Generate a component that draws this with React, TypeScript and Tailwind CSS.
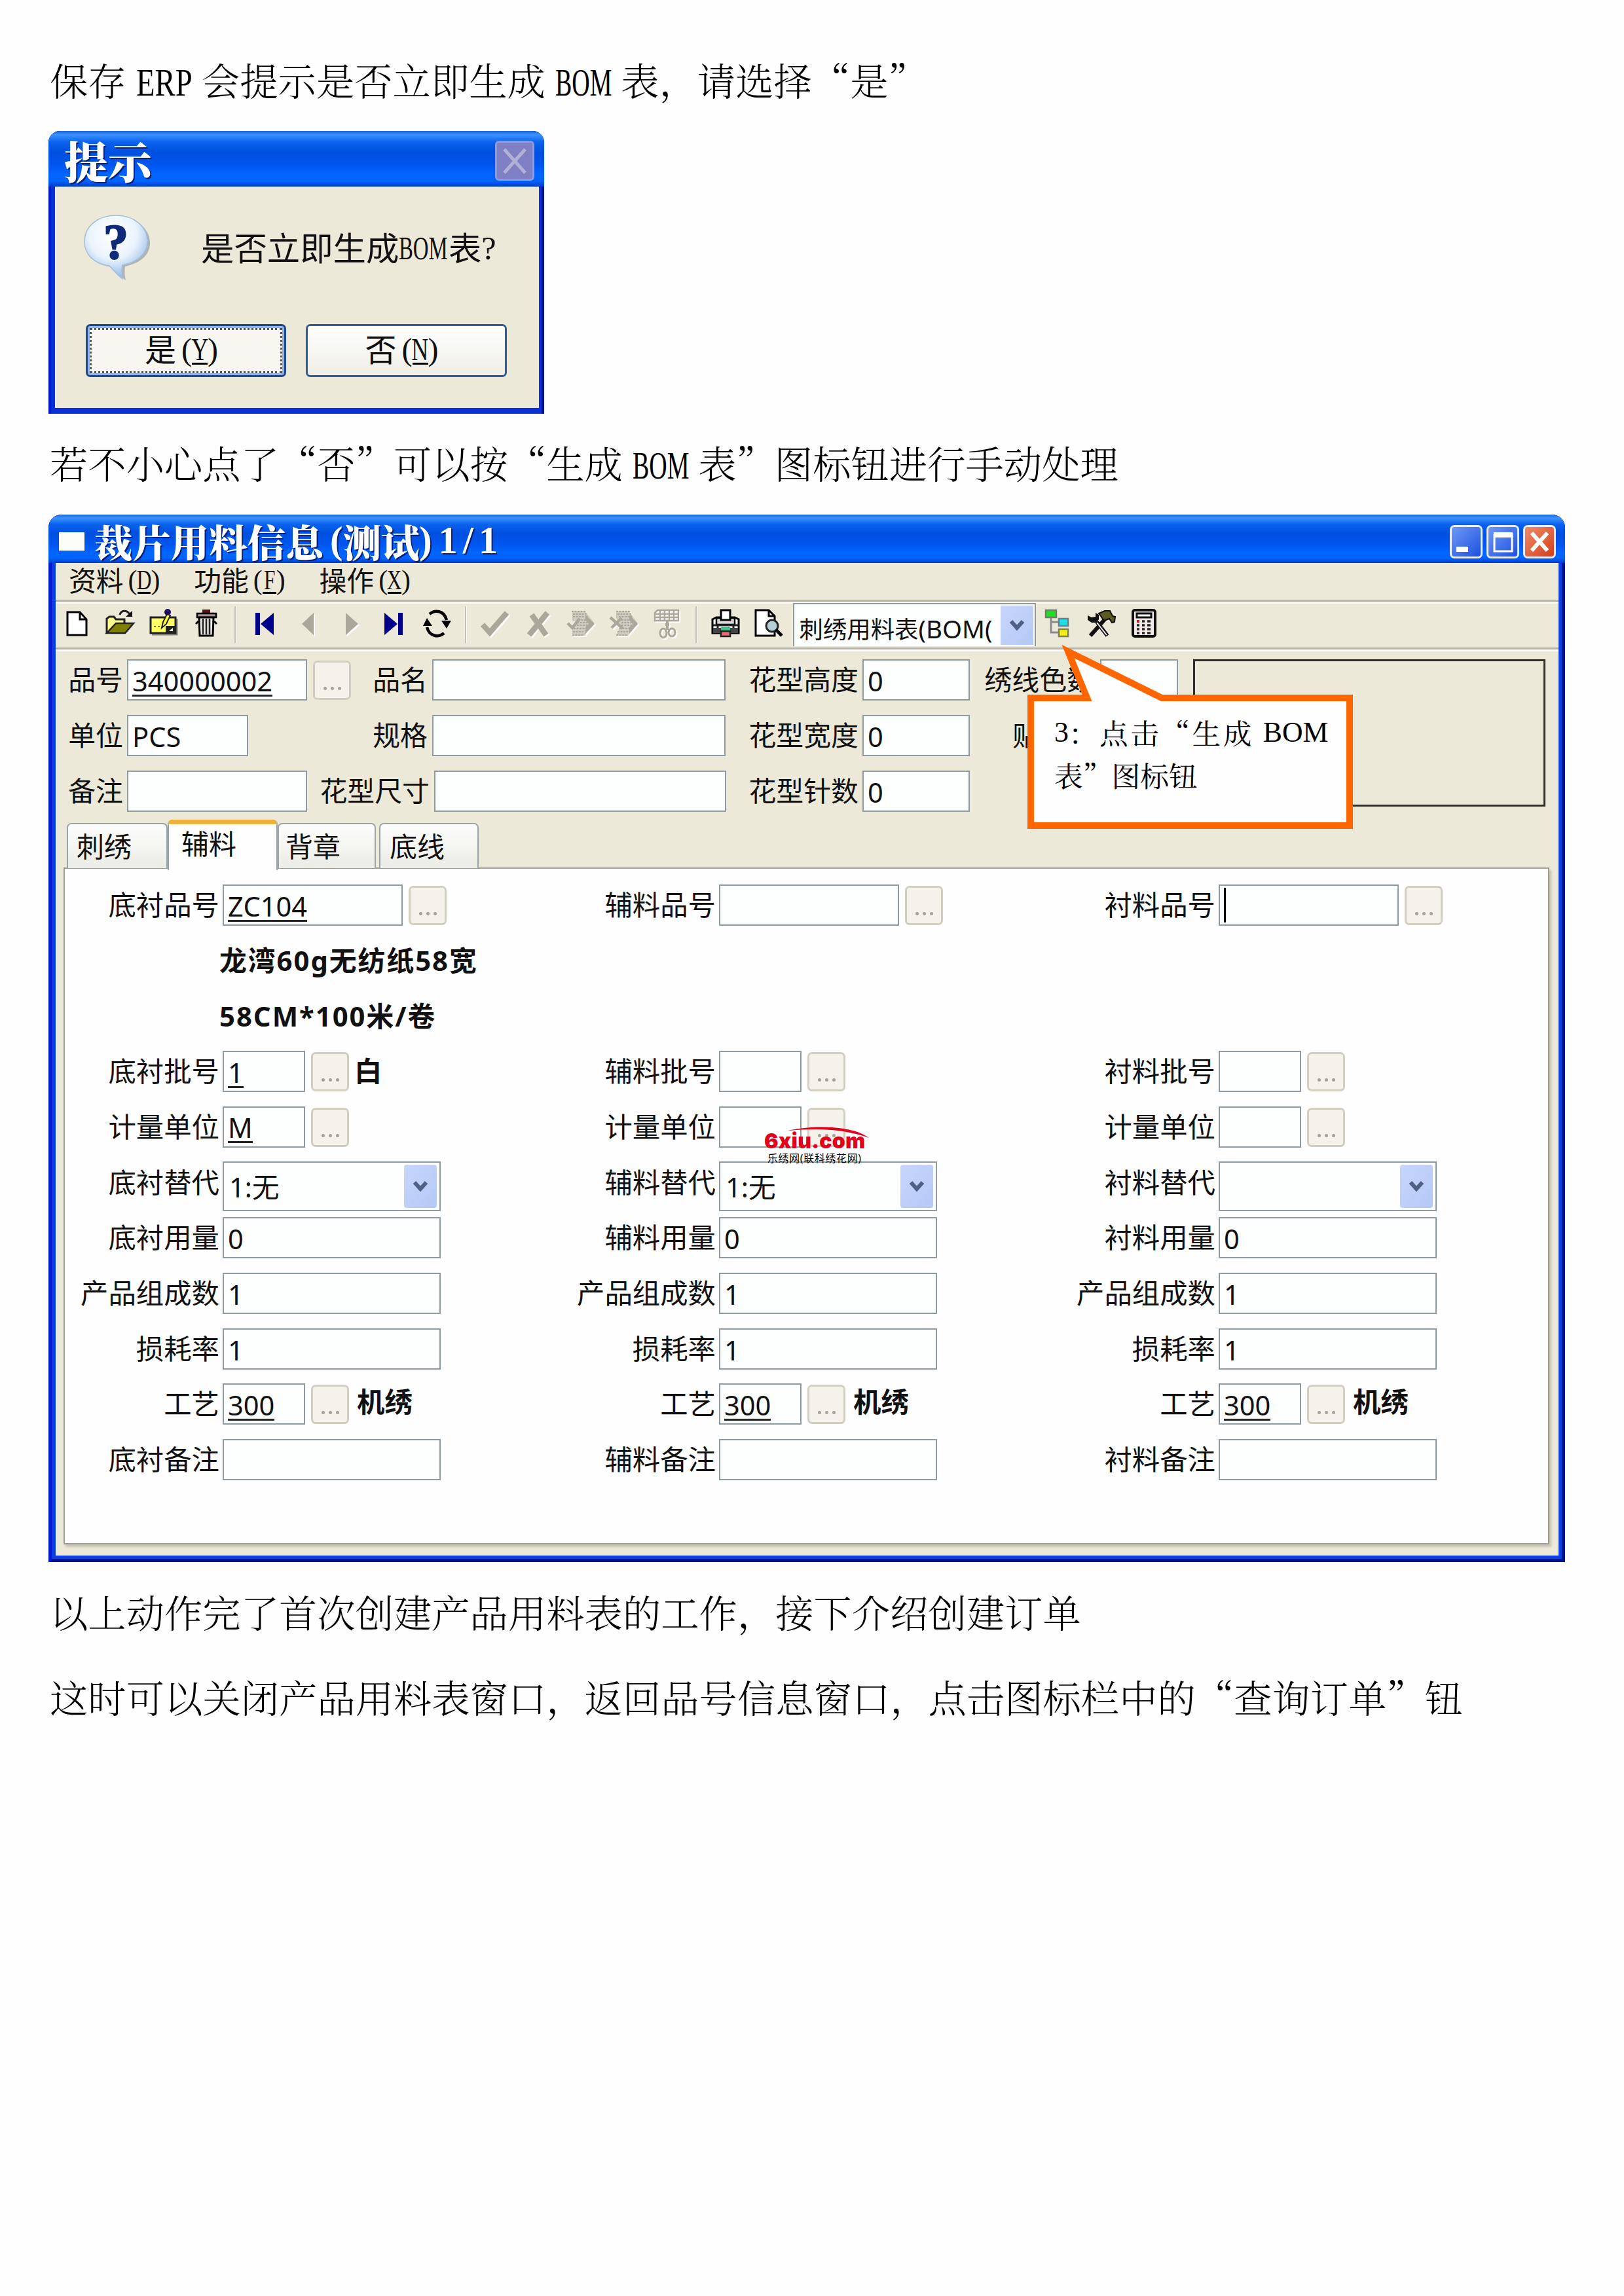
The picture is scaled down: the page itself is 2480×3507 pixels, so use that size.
import type { ReactNode } from "react";
import clsx from "clsx";

interface FieldRow {
  label: string;
  kind?: "text" | "select" | "empty";
  value?: string;
  width?: string;
  lookup?: boolean;
  note?: string;
  caret?: boolean;
}

const SMALL = "w-[126px]";
const MEDIUM = "w-[275px]";
const WIDE = "w-[333px]";

function buildRows(
  name: string,
  values: {
    item?: string;
    itemNotes?: string[];
    batch?: string;
    batchNote?: string;
    unit?: string;
    replace?: string;
    caret?: boolean;
  }
): FieldRow[] {
  const notes = values.itemNotes || ["", ""];
  return [
    {
      label: `${name}品号`,
      value: values.item,
      width: MEDIUM,
      lookup: true,
      caret: values.caret,
    },
    { label: "", kind: "empty", note: notes[0] },
    { label: "", kind: "empty", note: notes[1] },
    {
      label: `${name}批号`,
      value: values.batch,
      width: SMALL,
      lookup: true,
      note: values.batchNote,
    },
    { label: "计量单位", value: values.unit, width: SMALL, lookup: true },
    { label: `${name}替代`, kind: "select", value: values.replace },
    { label: `${name}用量`, value: "0", width: WIDE },
    { label: "产品组成数", value: "1", width: WIDE },
    { label: "损耗率", value: "1", width: WIDE },
    { label: "工艺", value: "300", width: SMALL, lookup: true, note: "机绣" },
    { label: `${name}备注`, width: WIDE },
  ];
}

const columns: FieldRow[][] = [
  buildRows("底衬", {
    item: "ZC104",
    itemNotes: ["龙湾60g无纺纸58宽", "58CM*100米/卷"],
    batch: "1",
    batchNote: "白",
    unit: "M",
    replace: "1:无",
  }),
  buildRows("辅料", { replace: "1:无" }),
  buildRows("衬料", { caret: true }),
];

// Latin letters squeezed to half the width of a Chinese character
function Half({ children, wide }: { children: string; wide?: boolean }) {
  return (
    <span className="inline-block w-[1.46em] whitespace-nowrap font-['Liberation_Serif',serif]">
      <span
        className={clsx(
          "inline-block origin-left",
          wide ? "scale-x-[0.8]" : "scale-x-[0.65]"
        )}
      >
        {children}
      </span>
    </span>
  );
}

function Key({ children }: { children: string }) {
  return (
    <span className="inline-flex font-['Liberation_Serif',serif]">
      <span className="w-[0.5em] text-right">(</span>
      <span className="flex h-[0.98em] w-[0.5em] justify-center border-b-[3px] border-black leading-none">
        <span className="scale-x-75">{children}</span>
      </span>
      <span className="w-[0.5em]">)</span>
    </span>
  );
}

function Paragraph({ children }: { children: ReactNode }) {
  return (
    <p className="flex h-[60px] items-center whitespace-pre pl-[76px] font-['Noto_Serif_CJK_SC','Noto_Sans_CJK_SC',serif] text-[58.33px] font-light leading-none text-black">
      <span>{children}</span>
    </p>
  );
}

function TextBox({
  value,
  width,
  underline,
  caret,
}: {
  value?: string;
  width: string;
  underline?: boolean;
  caret?: boolean;
}) {
  return (
    <div
      className={clsx(
        "flex h-[63px] shrink-0 items-center border-2 border-[#8f9ba3] bg-[#fdfefe] pl-[6px]",
        width
      )}
    >
      {caret && <span className="h-[53px] w-[3px] bg-black" />}
      {value && (
        <span
          className={clsx(
            "mt-[3px] text-[41.6px] leading-[42px]",
            underline && "mt-[5px] border-b-[3px] border-[#222]"
          )}
        >
          {value}
        </span>
      )}
    </div>
  );
}

function LookupButton() {
  return (
    <div className="ml-[9px] flex h-[60px] w-[58px] shrink-0 items-end justify-center gap-[6px] rounded-[7px] border-[3px] border-[#d3cfc0] bg-[#f4f2ea] pb-[12px]">
      <span className="size-[5px] rounded-full bg-[#a5a297]" />
      <span className="size-[5px] rounded-full bg-[#a5a297]" />
      <span className="size-[5px] rounded-full bg-[#a5a297]" />
    </div>
  );
}

function Chevron() {
  return (
    <svg width="24" height="20" viewBox="0 0 24 20" fill="none">
      <path d="M3 4l9 10 9-10" stroke="#4d6185" strokeWidth="6" />
    </svg>
  );
}

function SelectBox({ value }: { value?: string }) {
  return (
    <div className="flex h-[76px] w-[333px] shrink-0 items-center border-2 border-[#8f9ba3] bg-[#fdfefe] pl-[8px] pr-[4px]">
      <span className="mt-[3px] flex-1 text-[41.6px] leading-none">{value}</span>
      <span className="flex h-[66px] w-[50px] items-center justify-center rounded-[4px] bg-linear-to-br from-[#c8d6fb] to-[#b4c8f6]">
        <Chevron />
      </span>
    </div>
  );
}

function FormRow({ row }: { row: FieldRow }) {
  if (row.kind === "empty") {
    return (
      <div className="h-[84.7px]">
        <div className="flex h-[63px] items-center pl-[236px] text-[41.8px] font-bold leading-none tracking-[2px] whitespace-nowrap">
          {row.note}
        </div>
      </div>
    );
  }

  return (
    <div className="flex h-[84.7px] items-start">
      <div className="mr-[5px] flex h-[63px] w-[236px] items-center justify-end text-[42.4px] leading-none">
        {row.label}
      </div>
      {row.kind === "select" ? (
        <SelectBox value={row.value} />
      ) : (
        <TextBox
          value={row.value}
          width={row.width || WIDE}
          underline={row.lookup}
          caret={row.caret}
        />
      )}
      {row.lookup && (
        <div className="pt-[2px]">
          <LookupButton />
        </div>
      )}
      {row.note && (
        <div
          className={clsx(
            "flex h-[63px] items-center text-[42.4px] font-bold leading-none",
            row.note === "白" ? "ml-[8px]" : "ml-[12px] pb-[6px]"
          )}
        >
          {row.note}
        </div>
      )}
    </div>
  );
}

function ToolIcon({ children }: { children: ReactNode }) {
  return (
    <span className="flex w-[65.6px] shrink-0 justify-center">
      <svg width="48" height="48" viewBox="0 0 48 48" fill="none">
        {children}
      </svg>
    </span>
  );
}

function Divider() {
  return (
    <span className="mx-[10.5px] h-[56px] w-[3px] shrink-0 border-r border-white bg-[#c5c2b2]" />
  );
}

// Grey glyph with the white relief XP puts behind disabled icons
function Disabled({ children }: { children: ReactNode }) {
  return (
    <ToolIcon>
      <g transform="translate(2 2)" className="text-white">
        {children}
      </g>
      <g className="text-[#aca899]">{children}</g>
    </ToolIcon>
  );
}

function Toolbar() {
  return (
    <div className="flex h-[76px] items-center border-y-[3px] border-[#b5b3a6] bg-[#ece9d8] shadow-[inset_0_3px_0_#fbfaf5,0_3px_0_#fbfaf5]">
      <ToolIcon>
        <path d="M9 5h19l10 11v24H9z" fill="#fff" stroke="#000" strokeWidth="3" />
        <path d="M28 5v11h10" stroke="#000" strokeWidth="3" />
      </ToolIcon>
      <ToolIcon>
        <path d="M4 37V15l4-3h7l3 4h13v7" fill="#ffff8c" stroke="#222" strokeWidth="3" />
        <path d="M4 37l14-15h27L32 37z" fill="#808000" stroke="#222" strokeWidth="2.5" />
        <path d="M24 9c2-7 10-8 15-1" stroke="#222" strokeWidth="3" />
        <path d="M33 12h10V3z" fill="#111" />
      </ToolIcon>
      <ToolIcon>
        <path d="M7 39h38V15" stroke="#8a887c" strokeWidth="3" />
        <path d="M5 13h38v24H5z" fill="#ffff66" stroke="#222" strokeWidth="3" />
        <path d="M28 26h15v11H28z" fill="#222" />
        <path d="M33 34l6-5v5z" fill="#eee" />
        <path d="M10 27h3m3 0h3" stroke="#808000" strokeWidth="2" />
        <path d="M22 29l2-9 6-12 5 2-6 13z" fill="#ffff30" stroke="#222" strokeWidth="2" />
        <circle cx="31" cy="5" r="5" fill="#1b0a60" />
      </ToolIcon>
      <ToolIcon>
        <path d="M18 1h12v6H18z" fill="#5a1010" />
        <path d="M10 7h29v6H10z" fill="#a89090" stroke="#000" strokeWidth="2.5" />
        <path d="M13 13h22l-1 28H14z" fill="#f2f0e8" stroke="#000" strokeWidth="3" />
        <path d="M19 15v24M24 15v24M29 15v24" stroke="#222" strokeWidth="2.6" />
        <path d="M12 19l-4 4M36 19l4 4" stroke="#000" strokeWidth="3" />
      </ToolIcon>
      <Divider />
      <ToolIcon>
        <path d="M10 6h7v34h-7zM38 6v34L18 23z" fill="#00008b" />
      </ToolIcon>
      <Disabled>
        <path d="M33 6v34L15 23z" fill="currentColor" />
      </Disabled>
      <Disabled>
        <path d="M17 6v34l19-17z" fill="currentColor" />
      </Disabled>
      <ToolIcon>
        <path d="M31 6h7v34h-7zM10 6v34l20-17z" fill="#00008b" />
      </ToolIcon>
      <ToolIcon>
        <path d="M13 8c8-7 22-6 26 9M35 37c-8 7-22 6-26-9" stroke="#000" strokeWidth="4.5" />
        <path d="M31 18h15l-7 12zM3 26h14L9 14z" fill="#000" />
      </ToolIcon>
      <Divider />
      <Disabled>
        <path d="M5 24l11 12L42 6" stroke="currentColor" strokeWidth="8.5" />
      </Disabled>
      <Disabled>
        <path d="M10 40L38 6M14 9l22 31" stroke="currentColor" strokeWidth="8.5" />
      </Disabled>
      <Disabled>
        <path
          d="M11 4h20l14 18-12 14-3 5H11V30l8-9-8-3z"
          fill="currentColor"
          fillOpacity="0.55"
        />
        <path
          d="M10 4h20l4 9M12 8h18M12 12h18M20 17h14M18 21h18M18 25h18M13 30h20M12 35h16M11 40h18"
          stroke="currentColor"
          strokeWidth="2"
          strokeDasharray="3 1.5"
        />
        <path d="M31 9l14 14-14 15V28l5-5-5-6z" fill="currentColor" />
        <path d="M4 22l7 7 11-14" stroke="currentColor" strokeWidth="4.5" />
      </Disabled>
      <Disabled>
        <path
          d="M12 4h20l13 18-12 14-3 5H12l4-9 2-8-6-10z"
          fill="currentColor"
          fillOpacity="0.55"
        />
        <path
          d="M12 4h20l4 9M14 8h16M16 12h16M20 17h14M20 21h16M20 25h16M17 30h16M14 35h16M12 40h18"
          stroke="currentColor"
          strokeWidth="2"
          strokeDasharray="3 1.5"
        />
        <path d="M32 9l13 14-13 15V28l5-5-5-6z" fill="currentColor" />
        <path d="M3 13l19 17M20 14L5 29" stroke="currentColor" strokeWidth="4.5" />
      </Disabled>
      <Disabled>
        <path
          d="M9 2h32v16H5V6zM5 8h36M5 13h36M13 2v16M20 2v16M27 2v16M34 2v16"
          stroke="currentColor"
          strokeWidth="2.4"
        />
        <path d="M24 18v14M21 24h6" stroke="currentColor" strokeWidth="4" />
        <ellipse cx="18" cy="37" rx="5" ry="7" stroke="currentColor" strokeWidth="3" />
        <ellipse cx="31" cy="36" rx="5" ry="6" stroke="currentColor" strokeWidth="3" />
      </Disabled>
      <Divider />
      <ToolIcon>
        <path d="M4 16l6-3h28l6 3v21H4z" fill="#fff" stroke="#000" strokeWidth="3" />
        <path d="M10 14h28v10H10z" fill="#d9d9d9" stroke="#000" strokeWidth="2.5" />
        <path d="M4 25h40M12 25v12M36 25v12" stroke="#222" strokeWidth="3" />
        <path d="M5 29h38v8H5z" fill="#444" />
        <path d="M17 2h14v15H17z" fill="#fff" stroke="#000" strokeWidth="3" />
        <path d="M17 28h14v6H17z" fill="#3fc48a" />
        <path d="M17 34h14v8H17z" fill="#e66a72" stroke="#222" strokeWidth="2.5" />
      </ToolIcon>
      <ToolIcon>
        <path d="M4 2h20l9 9v30H4z" fill="#fff" stroke="#000" strokeWidth="3" />
        <path d="M24 2v9h9" stroke="#000" strokeWidth="3" />
        <circle cx="29" cy="26" r="9" fill="#b5d0d4" stroke="#222" strokeWidth="3" />
        <path d="M35 32l9 9" stroke="#000" strokeWidth="5" />
      </ToolIcon>
      <div className="ml-[4px] mr-px flex h-[66px] w-[371px] shrink-0 items-center border-2 border-b-0 border-[#8f9ba3] bg-[#fdfefe] pr-[2px]">
        <span className="flex-1 whitespace-nowrap pl-[8px] pt-[10px] text-[36.4px] leading-[46px]">
          刺绣用料表<span className="text-[38.5px]">(BOM(</span>
        </span>
        <span className="flex h-[60px] w-[50px] items-center justify-center bg-linear-to-br from-[#c8d6fb] to-[#b4c8f6]">
          <Chevron />
        </span>
      </div>
      <ToolIcon>
        <path d="M14 13v23h12M14 20h12" stroke="#8a8a8a" strokeWidth="3" />
        <path d="M6 2h16v11H6z" fill="#1fe01f" stroke="#6b7f6b" strokeWidth="2.5" />
        <path d="M26 15h14v11H26z" fill="#16e0e8" stroke="#6b7f8b" strokeWidth="2.5" />
        <path d="M26 31h14v11H26z" fill="#f6ee10" stroke="#7f7f5b" strokeWidth="2.5" />
      </ToolIcon>
      <ToolIcon>
        <path d="M8 41l24-27" stroke="#111" strokeWidth="6" />
        <path d="M18 20l16 21" stroke="#111" strokeWidth="6" />
        <path d="M18 21l15 19" stroke="#eee" strokeWidth="2" />
        <path d="M4 10v7l6 4h8l3-5V9l-5-3v6l-6 1z" fill="#111" />
        <path d="M21 7l9-4h8l4 8 4 1-1 8-4 1-4-6-8 3z" fill="#5b5a20" stroke="#111" strokeWidth="2" />
      </ToolIcon>
      <ToolIcon>
        <rect x="8" y="2" width="34" height="40" rx="3" fill="#f3e8e6" stroke="#111" strokeWidth="4" />
        <path d="M14 7h22v6H14z" fill="#fff" stroke="#111" strokeWidth="3" />
        <path
          d="M14 19h4m4 0h4m4 0h5M14 25h4m4 0h4m4 0h5M14 31h4m4 0h4m4 0h5M14 37h4m4 0h4m4 0h5"
          stroke="#222"
          strokeWidth="3.5"
        />
        <path d="M14 19h4" stroke="#b22" strokeWidth="3.5" />
      </ToolIcon>
    </div>
  );
}

function HeaderLabel({
  children,
  className,
}: {
  children: string;
  className?: string;
}) {
  return (
    <span
      className={clsx(
        "shrink-0 pb-[2px] text-right text-[41.9px] leading-none whitespace-nowrap",
        className
      )}
    >
      {children}
    </span>
  );
}

function HeaderForm() {
  return (
    <div className="flex h-[260px] items-start pt-[15px]">
      <div className="flex w-[1714px] flex-col gap-[22px]">
        <div className="flex items-center">
          <HeaderLabel className="mr-[6px] w-[103px]">品号</HeaderLabel>
          <TextBox value="340000002" width={MEDIUM} underline />
          <LookupButton />
          <HeaderLabel className="ml-auto w-[119px] pr-[7px]">品名</HeaderLabel>
          <TextBox width="w-[448px]" />
          <HeaderLabel className="w-[209px] pr-[6px]">花型高度</HeaderLabel>
          <TextBox value="0" width="w-[164px]" />
          <HeaderLabel className="w-[199px] pr-[9px]">绣线色数</HeaderLabel>
          <TextBox width="w-[119px]" />
        </div>
        <div className="flex items-center">
          <HeaderLabel className="mr-[6px] w-[103px]">单位</HeaderLabel>
          <TextBox value="PCS" width="w-[185px]" />
          <HeaderLabel className="ml-auto w-[119px] pr-[7px]">规格</HeaderLabel>
          <TextBox width="w-[448px]" />
          <HeaderLabel className="w-[209px] pr-[6px]">花型宽度</HeaderLabel>
          <TextBox value="0" width="w-[164px]" />
          <HeaderLabel className="w-[107px]">贴</HeaderLabel>
          <span className="w-[211px]" />
        </div>
        <div className="flex items-center">
          <HeaderLabel className="mr-[6px] w-[103px]">备注</HeaderLabel>
          <TextBox width={MEDIUM} />
          <HeaderLabel className="ml-auto pr-[7px]">花型尺寸</HeaderLabel>
          <TextBox width="w-[446px]" />
          <HeaderLabel className="w-[208px] pr-[6px]">花型针数</HeaderLabel>
          <TextBox value="0" width="w-[164px]" />
          <span className="w-[318px]" />
        </div>
      </div>
      <div className="ml-[23px] h-[225px] w-[538px] border-[3px] border-[#2e2d2a]" />
    </div>
  );
}

function Tab({ children, className }: { children: string; className?: string }) {
  return (
    <div
      className={clsx(
        "flex h-[69px] items-center rounded-t-[7px] border-2 border-b-0 border-[#9aa5aa] bg-linear-to-b from-[#fdfdfc] to-[#ecece6] text-[42px] leading-none",
        className
      )}
    >
      {children}
    </div>
  );
}

function Tabs() {
  return (
    <div className="flex h-[74px] items-end pl-[17px]">
      <Tab className="w-[154px] pl-[13px]">刺绣</Tab>
      {/* the active tab hangs over the top edge of the panel */}
      <div className="z-10 -mb-[3px] flex h-[77px] w-[168px] items-center rounded-t-[7px] border-x-2 border-t-[7px] border-x-[#9aa5aa] border-t-[#f0b03c] bg-[#fefefe] pb-[10px] pl-[19px] text-[42px] leading-none">
        辅料
      </div>
      <Tab className="w-[150px] pl-[10px]">背章</Tab>
      <Tab className="ml-[5px] w-[152px] pl-[14px]">底线</Tab>
    </div>
  );
}

function Callout() {
  return (
    <div className="absolute left-[1495px] top-[190px] h-[292px] w-[500px] font-['Noto_Serif_CJK_SC','Noto_Sans_CJK_SC',serif] text-[43.75px] leading-none text-black">
      <svg
        className="absolute left-0 top-0"
        width="500"
        height="292"
        viewBox="0 0 500 292"
      >
        <path
          d="M5 90H91L62 19L205 90H492V285H5Z"
          fill="#fefefe"
          stroke="#ff6600"
          strokeWidth="10"
          strokeMiterlimit="10"
        />
      </svg>
      <div className="relative mt-[110px] flex h-[65px] items-center whitespace-pre pl-[41px]">
        <span className="font-['Liberation_Serif',serif]">3</span>
        <span className="tracking-[3.4px]">：点击“生成</span>
        <span className="ml-[14px] font-['Liberation_Serif',serif]">BOM</span>
      </div>
      <div className="relative flex h-[65px] items-center pl-[41px]">
        表”图标钮
      </div>
    </div>
  );
}

function SiteMark() {
  return (
    <div className="absolute left-[1093px] top-[935px] w-[170px]">
      <svg
        className="absolute left-[36px] top-0"
        width="124"
        height="24"
        viewBox="0 0 124 24"
      >
        <path d="M0 6C40-3 100-2 124 17C90 5 50 1 0 6z" fill="#e2001a" />
      </svg>
      <div className="font-['Inter','Liberation_Sans',sans-serif] text-[32px] font-black leading-[44px] tracking-[0.2px] text-[#e2001a]">
        6xiu.com
      </div>
      <div className="-mt-[6px] pl-[5px] text-[15.8px] leading-[20px] tracking-[0.8px] text-black whitespace-nowrap">
        乐绣网(联科绣花网)
      </div>
    </div>
  );
}

function CaptionButton({
  children,
  close,
}: {
  children: ReactNode;
  close?: boolean;
}) {
  return (
    <span
      className={clsx(
        "flex h-[51px] w-[50px] items-center justify-center rounded-[7px] border-[3px] border-[#e6ecfb] bg-linear-to-br",
        close ? "from-[#f08a66] to-[#d23c12]" : "from-[#6f97f5] to-[#1f4fe0]"
      )}
    >
      <svg width="44" height="45" viewBox="0 0 44 45" fill="none">
        {children}
      </svg>
    </span>
  );
}

const titleBar =
  "[background-image:linear-gradient(to_bottom,#1c62d6_0%,#3b93ff_7%,#0a62ee_20%,#0050e0_38%,#0055ee_60%,#0066ff_78%,#0064fc_90%,#003cc8_100%)]";

const titleText =
  "font-['Noto_Serif_CJK_SC','Noto_Sans_CJK_SC',serif] font-black leading-none text-white whitespace-nowrap [text-shadow:2px_2px_0_#0a1f7a]";

function ConfirmDialog() {
  return (
    <section className="ml-[74px] flex h-[432px] w-[757px] flex-col rounded-t-[18px] bg-[#0831d9] shadow-[inset_4px_0_0_#0019cf,inset_-4px_0_0_#00138c]">
      <header
        className={clsx(
          "flex h-[85px] items-center justify-between rounded-t-[18px] pl-[24px] pr-[15px]",
          titleBar
        )}
      >
        <h2 className={clsx("pt-[4px] text-[67px]", titleText)}>提示</h2>
        <span className="mt-[6px] flex h-[61px] w-[60px] items-center justify-center rounded-[6px] border-[3px] border-[#8d9ae0] bg-[#7f7fc4]">
          <svg width="40" height="44" viewBox="0 0 40 44" fill="none">
            <path d="M4 4l32 36M36 4L4 40" stroke="#b3b0d8" strokeWidth="5" />
          </svg>
        </span>
      </header>
      <div className="ml-[10px] mr-[8px] flex h-[338px] flex-col bg-[#ece9d8] shadow-[inset_2px_2px_0_#e6eefa]">
        <div className="flex h-[198px] items-start pl-[43px] pt-[42px]">
          <svg width="102" height="106" viewBox="0 0 102 106">
            <defs>
              <radialGradient id="bubble" cx="0.45" cy="0.3" r="0.7">
                <stop offset="0" stopColor="#ffffff" />
                <stop offset="0.55" stopColor="#eaf3fd" />
                <stop offset="1" stopColor="#8fb9e6" />
              </radialGradient>
            </defs>
            <path
              d="M54 6C26 6 6 22 6 45c0 20 15 33 38 36 6 6 12 14 21 20-2-8-2-14-1-21 22-5 38-16 38-36C102 22 82 6 54 6z"
              fill="#7d8794"
              opacity="0.55"
            />
            <path
              d="M50 2C22 2 2 19 2 42c0 20 15 34 38 37 6 6 12 14 20 20-2-8-1-14 0-21 22-4 38-17 38-36C98 19 78 2 50 2z"
              fill="url(#bubble)"
              stroke="#a5bddb"
              strokeWidth="1.5"
            />
            <text
              x="50"
              y="68"
              textAnchor="middle"
              fontFamily="Liberation Serif, serif"
              fontWeight="bold"
              fontSize="76"
              fill="#0e2a78"
              stroke="#0e2a78"
              strokeWidth="2"
            >
              ?
            </text>
          </svg>
          <p className="ml-[78px] mt-[27px] flex items-center whitespace-nowrap text-[50.4px] leading-none">
            是否立即生成
            <Half>BOM</Half>
            <span className="ml-[2px]">表</span>
            <span className="font-['Liberation_Serif',serif]">?</span>
          </p>
        </div>
        <div className="mt-[12px] flex gap-[30px] pl-[47px] text-[48px] leading-none">
          <div className="h-[81px] w-[306px] rounded-[7px] border-[3px] border-[#1d4a8c] bg-[#8fb3ea] p-[3px]">
            <div className="flex h-full items-center justify-center border-[3px] border-dotted border-[#55524c] bg-[#f7f6f1] pb-[3px] pr-[6px]">
              是<Key>Y</Key>
            </div>
          </div>
          <div className="flex h-[81px] w-[307px] items-center justify-center rounded-[7px] border-[3px] border-[#2f5c9a] bg-linear-to-b from-white to-[#efeee6] pb-[3px] pr-[6px]">
            否<Key>N</Key>
          </div>
        </div>
      </div>
    </section>
  );
}

function MaterialWindow() {
  return (
    <section className="relative ml-[74px] h-[1600px] w-[2316px] rounded-t-[20px] bg-[#0a3fe0] shadow-[inset_5px_0_0_#0019cf,inset_-5px_0_0_#00138c,inset_0_-5px_0_#00138c]">
      <header
        className={clsx(
          "flex h-[74px] items-center rounded-t-[20px] pl-[16px] pr-[14px]",
          titleBar
        )}
      >
        <span className="mt-[7px] h-[28px] w-[39px] bg-[#fdfdf8]" />
        <h1
          className={clsx("ml-[15px] mt-[7px] flex text-[58.4px]", titleText)}
        >
          裁片用料信息
          <span className="w-[0.5em] text-right font-['Liberation_Serif',serif] font-bold">
            (
          </span>
          测试
          <span className="font-['Liberation_Serif',serif] font-bold tracking-[3px]">
            <span className="inline-block w-[0.5em]">)</span>
            <span>1</span>
            <span className="inline-block w-[0.5em] text-center">/</span>
            <span>1</span>
          </span>
        </h1>
        <div className="ml-auto mt-[9px] flex gap-[6px]">
          <CaptionButton>
            <path d="M7 30h18v8H7z" fill="#fff" />
          </CaptionButton>
          <CaptionButton>
            <path d="M9 12h27v25H9z" stroke="#fff" strokeWidth="3" />
            <path d="M8 8h29v8H8z" fill="#fff" />
          </CaptionButton>
          <CaptionButton close>
            <path d="M10 9l24 27M34 9L10 36" stroke="#fff" strokeWidth="6" />
          </CaptionButton>
        </div>
      </header>
      <div className="ml-[11px] mr-[10px] h-[1516px] bg-[#ece9d8]">
        <nav className="flex h-[56px] gap-[45px] pl-[20px] pt-[6px] text-[41.8px] leading-none">
          <span className="flex">
            资料<Key>D</Key>
          </span>
          <span className="flex">
            功能<Key>F</Key>
          </span>
          <span className="flex">
            操作<Key>X</Key>
          </span>
        </nav>
        <Toolbar />
        <HeaderForm />
        <Tabs />
        <div className="ml-[12px] mr-[14px] mt-[-1px] grid h-[1034px] grid-cols-[758px_763px_1fr] border-2 border-[#9c9d94] bg-[#fefefe] pt-[24px] shadow-[3px_4px_3px_#c9c5b2]">
          {columns.map((rows, i) => (
            <div key={i}>
              {rows.map((row, j) => (
                <FormRow key={j} row={row} />
              ))}
            </div>
          ))}
        </div>
      </div>
      <SiteMark />
      <Callout />
    </section>
  );
}

export default function App() {
  return (
    <main
      lang="zh-CN"
      className="h-[3507px] w-[2480px] overflow-hidden bg-[#fefefe] pt-[94px] font-['Noto_Sans','Noto_Sans_CJK_SC',sans-serif] text-[#111]"
    >
      <Paragraph>
        保存 <Half wide>ERP</Half> 会提示是否立即生成 <Half>BOM</Half>{" "}
        表，请选择“是”
      </Paragraph>
      <div className="h-[46px]" />
      <ConfirmDialog />
      <div className="h-[47px]" />
      <Paragraph>
        若不小心点了“否”可以按“生成 <Half>BOM</Half> 表”图标钮进行手动处理
      </Paragraph>
      <div className="h-[47px]" />
      <MaterialWindow />
      <div className="h-[45px]" />
      <Paragraph>以上动作完了首次创建产品用料表的工作，接下介绍创建订单</Paragraph>
      <div className="h-[70px]" />
      <Paragraph>
        这时可以关闭产品用料表窗口，返回品号信息窗口，点击图标栏中的“查询订单”钮
      </Paragraph>
    </main>
  );
}
